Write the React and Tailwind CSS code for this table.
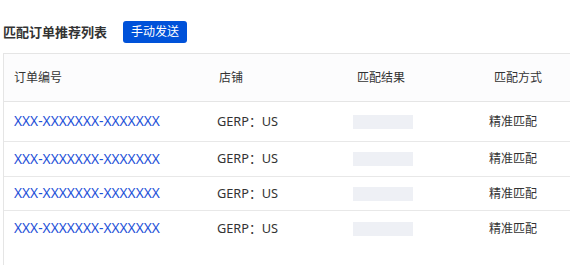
import React from 'react';

const rows = [
  { id: 'XXX-XXXXXXX-XXXXXXX', shop: 'GERP：US', method: '精准匹配', h: 'h-[40px]' },
  { id: 'XXX-XXXXXXX-XXXXXXX', shop: 'GERP：US', method: '精准匹配', h: 'h-[35px]' },
  { id: 'XXX-XXXXXXX-XXXXXXX', shop: 'GERP：US', method: '精准匹配', h: 'h-[34px]' },
  { id: 'XXX-XXXXXXX-XXXXXXX', shop: 'GERP：US', method: '精准匹配', h: 'h-[35px]' },
];

const cols = 'grid grid-cols-[203px_140px_140px_1fr] items-center';

const App = () => {
  return (
    <div
      className="w-[570px] h-[265px] overflow-hidden bg-white text-[#333]"
      style={{ fontFamily: '"Noto Sans", "Noto Sans CJK SC", sans-serif' }}
    >
      {/* Title bar */}
      <div className="flex items-center h-[22px] mt-[21px] pl-[3px]">
        <h3 className="text-[13px] font-semibold text-[#333] leading-none">匹配订单推荐列表</h3>
        <button className="ml-[16px] w-[64px] h-[22px] rounded-[3px] bg-[#0052d9] text-white text-[12px] leading-none">
          手动发送
        </button>
      </div>

      {/* Table */}
      <div className="mt-[10px] ml-[3px] w-[600px] h-[220px] border-l border-t border-[#e5e5e5]">
        <div className={`${cols} h-[48px] bg-[#fcfcfd] border-b border-[#e5e5e5] text-[12px] text-[#333]`}>
          <div className="pl-[10px]">订单编号</div>
          <div className="pl-[12px]">店铺</div>
          <div className="pl-[10px]">匹配结果</div>
          <div className="pl-[7px]">匹配方式</div>
        </div>
        {rows.map((r, i) => (
          <div
            key={i}
            className={`${cols} ${r.h} ${i < rows.length - 1 ? 'border-b border-[#e8e8e8]' : ''}`}
          >
            <a className="pl-[10px] text-[13.75px] text-[#1f52d8] cursor-pointer">{r.id}</a>
            <div className="pl-[10px] text-[12.75px] text-[#333]">{r.shop}</div>
            <div className="pl-[6px]">
              <div className="w-[60px] h-[14px] bg-[#eef0f5]" />
            </div>
            <div className="pl-[2px] text-[12px] text-[#333]">{r.method}</div>
          </div>
        ))}
      </div>
    </div>
  );
};

export default App;
